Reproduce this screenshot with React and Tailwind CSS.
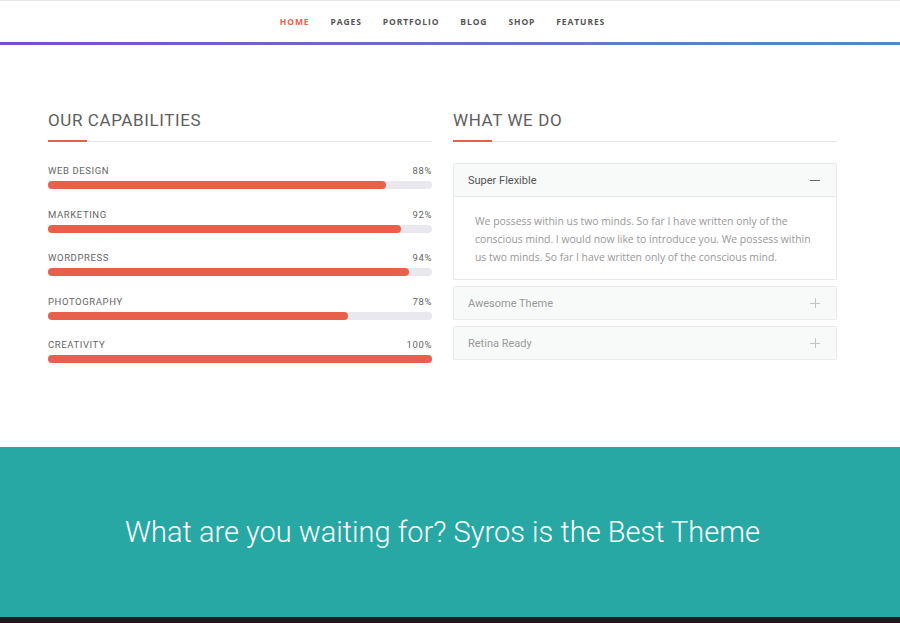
import React, { useState } from 'react';

const skills = [
  { label: 'WEB DESIGN', value: 88 },
  { label: 'MARKETING', value: 92 },
  { label: 'WORDPRESS', value: 94 },
  { label: 'PHOTOGRAPHY', value: 78 },
  { label: 'CREATIVITY', value: 100 },
];

const panels = [
  {
    title: 'Super Flexible',
    body: 'We possess within us two minds. So far I have written only of the conscious mind. I would now like to introduce you. We possess within us two minds. So far I have written only of the conscious mind.',
  },
  { title: 'Awesome Theme', body: '' },
  { title: 'Retina Ready', body: '' },
];

const navItems = ['HOME', 'PAGES', 'PORTFOLIO', 'BLOG', 'SHOP', 'FEATURES'];

const SectionTitle = ({ children }) => (
  <div className="mb-[21px]">
    <h3 className="text-[17px] leading-[24px] tracking-[0.6px] text-[#5e5e5e] font-normal">{children}</h3>
    <div className="relative mt-[9px] h-px bg-[#e6e6e6]">
      <span className="absolute left-0 -top-px h-[2px] w-[39px] bg-[#e9604a]"></span>
    </div>
  </div>
);

const App = () => {
  const [open, setOpen] = useState(0);

  return (
    <div className="w-[900px] h-[623px] overflow-hidden bg-white font-['Roboto',sans-serif]">
      {/* Navbar */}
      <div className="border-t border-[#e6e6e6]">
        <nav className="w-[885px] h-[41px] pt-[2px] flex items-center justify-center gap-[21px] font-['Open_Sans',sans-serif]">
          {navItems.map((item, i) => (
            <a
              key={item}
              className={`text-[8.5px] font-bold tracking-[0.9px] ${i === 0 ? 'text-[#e9604a]' : 'text-[#555]'}`}
            >
              {item}
            </a>
          ))}
        </nav>
        <div className="h-[3px] bg-gradient-to-r from-[#7a4bd0] to-[#4e8bcb]"></div>
      </div>

      {/* Capabilities + What we do */}
      <div className="w-[885px] h-[402px] pt-[63px]">
        <div className="ml-[48px] w-[789px] flex gap-[21px]">
          <div className="w-[384px]">
            <SectionTitle>OUR CAPABILITIES</SectionTitle>
            {skills.map((s) => (
              <div key={s.label} className="mb-[17.5px]">
                <div className="flex justify-between text-[9.5px] leading-[14px] tracking-[0.6px] text-[#666] pt-px">
                  <span>{s.label}</span>
                  <span>{s.value}%</span>
                </div>
                <div className="mt-[3px] h-[8px] rounded-full bg-[#e8e8ee]">
                  <div className="h-full rounded-full bg-[#e8604c]" style={{ width: `${s.value}%` }}></div>
                </div>
              </div>
            ))}
          </div>

          <div className="w-[384px]">
            <SectionTitle>WHAT WE DO</SectionTitle>
            <div className="flex flex-col gap-[6px]">
              {panels.map((p, i) => (
                <div key={p.title} className="border border-[#e8e9ea] rounded-[2px]">
                  <button
                    onClick={() => setOpen(open === i ? -1 : i)}
                    className="w-full h-[32px] px-[14px] flex items-center justify-between bg-[#f8f9f9] text-left"
                  >
                    <span className={`text-[11px] pt-[2px] ${open === i ? 'text-[#555]' : 'text-[#999]'}`}>{p.title}</span>
                    {open === i ? (
                      <span className="mr-[2px] w-[10px] h-px bg-[#666]"></span>
                    ) : (
                      <span className="relative mr-[2px] w-[10px] h-[10px]">
                        <span className="absolute left-0 top-[4.5px] w-[10px] h-px bg-[#c4c4c4]"></span>
                        <span className="absolute top-0 left-[4.5px] h-[10px] w-px bg-[#c4c4c4]"></span>
                      </span>
                    )}
                  </button>
                  {open === i && p.body && (
                    <div className="border-t border-[#e8e9ea] px-[21px] pt-[15px] pb-[13px] font-['Open_Sans',sans-serif] text-[10.4px] leading-[18px] text-[#999]">
                      {p.body}
                    </div>
                  )}
                </div>
              ))}
            </div>
          </div>
        </div>
      </div>

      {/* Call to action */}
      <div className="h-[170px] bg-[#27a8a4] flex items-center">
        <h2 className="w-[885px] text-center text-white text-[29px] font-light leading-[36px]">
          What are you waiting for? Syros is the Best Theme
        </h2>
      </div>
      <div className="h-[6px] bg-[#1b1b1f]"></div>
    </div>
  );
};

export default App;
